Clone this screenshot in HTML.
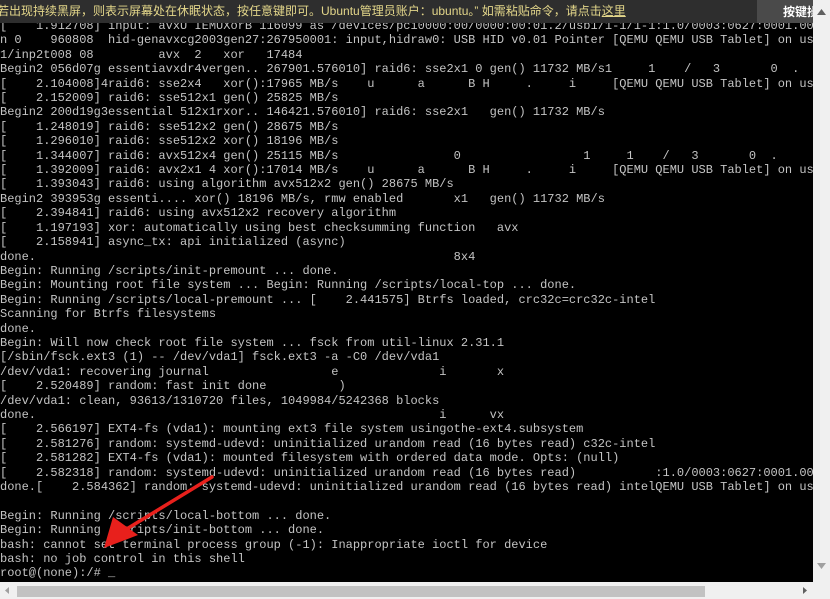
<!DOCTYPE html>
<html><head><meta charset="utf-8"><style>
html,body{margin:0;padding:0;width:830px;height:599px;overflow:hidden;background:#f0f0f0;position:relative}
#term{position:absolute;left:0;top:0;width:813px;height:582px;background:#000;overflow:hidden}
pre{position:absolute;left:0;top:19px;margin:0;font-family:"Liberation Mono",monospace;font-size:12px;line-height:14.4px;color:#c4c4c4;white-space:pre}
#banner{position:absolute;left:-3px;top:0;width:816px;height:23px;background:#2e2e2e;color:#e3d68a;font-family:"Liberation Sans","Noto Sans CJK SC",sans-serif;font-size:12px;line-height:23px;white-space:nowrap;overflow:hidden}
#btn{position:absolute;left:757px;top:0;width:56px;height:23px;background:#4a4a4a;color:#fff;font-family:"Noto Sans CJK SC",sans-serif;font-size:12px;font-weight:bold;line-height:23px;padding-left:26px;box-sizing:border-box;overflow:hidden;white-space:nowrap}
#vs{position:absolute;left:813px;top:0;width:17px;height:582px;background:#f0f0f0}
#hs{position:absolute;left:0;top:582px;width:813px;height:17px;background:#f0f0f0}
#thumb{position:absolute;left:17px;top:4px;width:688px;height:11px;background:#c2c2c2}
</style></head><body>
<div id="term">
<pre>[    1.912708] input: avxU IEMUXorB 116099 as /devices/pci0000:00/0000:00:01.2/usb1/1-1/1-1:1.0/0003:0627:0001.00
n 0    960808  hid-genavxcg2003gen27:267950001: input,hidraw0: USB HID v0.01 Pointer [QEMU QEMU USB Tablet] on us
1/inp2t008 08         avx  2   xor   17484
Begin2 056d07g essentiavxdr4vergen.. 267901.576010] raid6: sse2x1 0 gen() 11732 MB/s1     1    /   3       0  .
[    2.104008]4raid6: sse2x4   xor():17965 MB/s    u      a      B H     .     i     [QEMU QEMU USB Tablet] on us
[    2.152009] raid6: sse512x1 gen() 25825 MB/s
Begin2 200d19g3essential 512x1rxor.. 146421.576010] raid6: sse2x1   gen() 11732 MB/s
[    1.248019] raid6: sse512x2 gen() 28675 MB/s
[    1.296010] raid6: sse512x2 xor() 18196 MB/s
[    1.344007] raid6: avx512x4 gen() 25115 MB/s                0                 1     1    /   3       0  .
[    1.392009] raid6: avx2x1 4 xor():17014 MB/s    u      a      B H     .     i     [QEMU QEMU USB Tablet] on us
[    1.393043] raid6: using algorithm avx512x2 gen() 28675 MB/s
Begin2 393953g essenti.... xor() 18196 MB/s, rmw enabled       x1   gen() 11732 MB/s
[    2.394841] raid6: using avx512x2 recovery algorithm
[    1.197193] xor: automatically using best checksumming function   avx
[    2.158941] async_tx: api initialized (async)
done.                                                          8x4
Begin: Running /scripts/init-premount ... done.
Begin: Mounting root file system ... Begin: Running /scripts/local-top ... done.
Begin: Running /scripts/local-premount ... [    2.441575] Btrfs loaded, crc32c=crc32c-intel
Scanning for Btrfs filesystems
done.
Begin: Will now check root file system ... fsck from util-linux 2.31.1
[/sbin/fsck.ext3 (1) -- /dev/vda1] fsck.ext3 -a -C0 /dev/vda1
/dev/vda1: recovering journal                 e              i       x
[    2.520489] random: fast init done          )
/dev/vda1: clean, 93613/1310720 files, 1049984/5242368 blocks
done.                                                        i      vx
[    2.566197] EXT4-fs (vda1): mounting ext3 file system usingothe-ext4.subsystem
[    2.581276] random: systemd-udevd: uninitialized urandom read (16 bytes read) c32c-intel
[    2.581282] EXT4-fs (vda1): mounted filesystem with ordered data mode. Opts: (null)
[    2.582318] random: systemd-udevd: uninitialized urandom read (16 bytes read)           :1.0/0003:0627:0001.00
done.[    2.584362] random: systemd-udevd: uninitialized urandom read (16 bytes read) intelQEMU USB Tablet] on us

Begin: Running /scripts/local-bottom ... done.
Begin: Running /scripts/init-bottom ... done.
bash: cannot set terminal process group (-1): Inappropriate ioctl for device
bash: no job control in this shell
root@(none):/# _</pre>
<svg style="position:absolute;left:0;top:0" width="813" height="582">
<line x1="212" y1="477" x2="125" y2="530" stroke="#e8201c" stroke-width="3.5" stroke-linecap="round"/>
<polygon points="104,548 113,517 138,535" fill="#e8201c"/>
</svg>
</div>
<div id="banner">若出现持续黑屏，则表示屏幕处在休眠状态，按任意键即可。Ubuntu管理员账户：ubuntu。” 如需粘贴命令，请点击<u>这里</u></div>
<div id="btn">按键操</div>
<div id="vs"><svg width="17" height="582"><polygon points="4,15 13,15 8.5,9" fill="#606060"/><polygon points="4,563 13,563 8.5,569" fill="#a0a0a0"/></svg></div>
<div id="hs"><svg style="position:absolute;left:0;top:0" width="813" height="17"><polygon points="9,5 9,12 5,8.5" fill="#a0a0a0"/><polygon points="803,5 803,12 807,8.5" fill="#606060"/></svg><div id="thumb"></div></div>
</body></html>
